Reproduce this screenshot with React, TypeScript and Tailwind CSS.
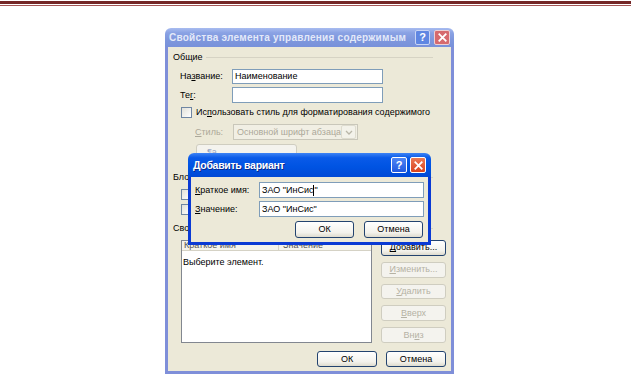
import React from "react";

function XIcon({ size = 8 }: { size?: number }) {
  return (
    <svg width={size} height={size} viewBox="0 0 10 10">
      <path d="M1.5 1.5 L8.5 8.5 M8.5 1.5 L1.5 8.5" stroke="white" strokeWidth="2" strokeLinecap="square" />
    </svg>
  );
}

function Btn({
  children,
  disabled,
  className = "",
}: {
  children?: React.ReactNode;
  disabled?: boolean;
  className?: string;
}) {
  return (
    <div
      className={
        "flex items-center justify-center rounded-[3px] border text-[9px] leading-none " +
        (disabled
          ? "border-[#cfcdc0] bg-[#f4f3ee] text-[#b5b2a4] "
          : "border-[#23436f] bg-[linear-gradient(180deg,#ffffff,#f3f2ec_70%,#dedbce)] text-black ") +
        className
      }
    >
      {children}
    </div>
  );
}

function Check() {
  return <div className="h-[11px] w-[11px] shrink-0 border border-[#6f86a3] bg-[linear-gradient(135deg,#e2e1d9,#ffffff)]" />;
}

function Group({ label }: { label: string }) {
  return (
    <div className="flex h-[11px] items-center pl-[5px] pr-[18px]">
      <span className="text-[9px] leading-none text-black">{label}</span>
      <div className="ml-[3px] h-px flex-1 bg-[#d6d3c4]" />
    </div>
  );
}

function InnerDialog() {
  return (
    <div className="absolute left-[23px] top-[125px] w-[243px]">
      <div className="flex h-[24px] items-center justify-between rounded-t-[6px] bg-[linear-gradient(180deg,#3d83f5_0%,#0a5ae8_20%,#0054e3_55%,#0049d6_100%)] pl-[5px] pr-[5px]">
        <span className="text-[10.5px] font-bold leading-none tracking-[-0.3px] text-white [text-shadow:1px_1px_0_#0a2a8a]">
          Добавить вариант
        </span>
        <div className="flex gap-[3px]">
          <div className="flex h-[16px] w-[16px] items-center justify-center rounded-[2px] border border-white bg-[linear-gradient(180deg,#4f86f5,#2159e0)] text-[11px] font-bold leading-none text-white">
            ?
          </div>
          <div className="flex h-[16px] w-[16px] items-center justify-center rounded-[2px] border border-white bg-[linear-gradient(180deg,#ec7a55,#d8431f)]">
            <XIcon size={9} />
          </div>
        </div>
      </div>
      <div className="flex flex-col border-x-[3px] border-b-[3px] border-[#0a3ad4] bg-[#ece9d8] pb-[4px] pt-[5px]">
        <div className="flex h-[16px] items-center pl-[4px] pr-[4px]">
          <div className="w-[64px] text-[9px] leading-none text-black">
            <span className="underline">К</span>раткое имя:
          </div>
          <div className="flex h-full flex-1 items-center border border-[#7f9db9] bg-white pl-[2px] text-[9px] leading-none text-black">
            ЗАО "ИнСис<span className="inline-block h-[11px] w-px bg-black" />"
          </div>
        </div>
        <div className="mt-[3px] flex h-[16px] items-center pl-[4px] pr-[4px]">
          <div className="w-[64px] text-[9px] leading-none text-black">
            <span className="underline">З</span>начение:
          </div>
          <div className="flex h-full flex-1 items-center border border-[#7f9db9] bg-white pl-[2px] text-[9px] leading-none text-black">
            ЗАО "ИнСис"
          </div>
        </div>
        <div className="mt-[4px] flex justify-end gap-[10px] pr-[5px]">
          <Btn className="h-[17px] w-[59px]">ОК</Btn>
          <Btn className="h-[17px] w-[59px]">Отмена</Btn>
        </div>
      </div>
    </div>
  );
}

export default function App() {
  return (
    <div className="min-h-[377px] w-[631px] bg-white font-['Liberation_Sans','Arial',sans-serif]">
      <div className="pt-[1px]">
        <div className="h-[3px] bg-[#742626]" />
        <div className="mt-[1px] h-px bg-[#a45656]" />
      </div>

      <div className="relative ml-[165px] mt-[22px] w-[289px]">
        {/* title bar (inactive) */}
        <div className="flex h-[19px] items-center justify-between rounded-t-[6px] bg-[linear-gradient(180deg,#a9bcf0_0%,#8aa2e4_25%,#7e97dd_60%,#7891da_100%)] pl-[4px] pr-[4px]">
          <span className="text-[10px] font-bold leading-none tracking-[0.25px] text-[#e3e9f9]">
            Свойства элемента управления содержимым
          </span>
          <div className="flex gap-[4px]">
            <div className="flex h-[15px] w-[15px] items-center justify-center rounded-[2px] border border-[#c9d5f5] bg-[#5f86e2] text-[11px] font-bold leading-none text-white">
              ?
            </div>
            <div className="flex h-[15px] w-[16px] items-center justify-center rounded-[2px] border border-[#ecd0d3] bg-[#d66a6e]">
              <XIcon size={9} />
            </div>
          </div>
        </div>

        {/* body */}
        <div className="flex flex-col border-x-[3px] border-b-[3px] border-[#7f8fd9] bg-[#ece9d8] pb-[4px] pt-[5px]">
          <Group label="Общие" />

          <div className="mt-[6px] flex h-[15px] items-center pl-[12px]">
            <div className="w-[52px] text-[9px] leading-none text-black">
              На<span className="underline">з</span>вание:
            </div>
            <div className="flex h-full w-[151px] items-center border border-[#7f9db9] bg-white pl-[2px] text-[9px] leading-none text-black">
              Наименование
            </div>
          </div>

          <div className="mt-[3px] flex h-[16px] items-center pl-[12px]">
            <div className="w-[52px] text-[9px] leading-none text-black">
              Те<span className="underline">г</span>:
            </div>
            <div className="h-full w-[151px] border border-[#7f9db9] bg-white" />
          </div>

          <div className="mt-[4px] flex h-[11px] items-center gap-[4px] pl-[13px]">
            <Check />
            <span className="text-[9px] leading-none text-black">
              Ис<span className="underline">п</span>ользовать стиль для форматирования содержимого
            </span>
          </div>

          <div className="mt-[6px] flex h-[16px] items-center pl-[27px]">
            <div className="w-[38px] text-[9px] leading-none text-[#aca899]">
              <span className="underline">С</span>тиль:
            </div>
            <div className="flex h-full w-[125px] items-center border border-[#c9c7ba] bg-[#f1efe4]">
              <span className="flex-1 overflow-hidden whitespace-nowrap pl-[3px] text-[9px] leading-none text-[#aca899]">
                Основной шрифт абзаца
              </span>
              <div className="mr-px flex h-[14px] w-[15px] shrink-0 items-center justify-center rounded-[2px] border border-[#dedccf] bg-[#f3f2ea]">
                <svg width="8" height="5" viewBox="0 0 8 5">
                  <path d="M1 1 L4 4 L7 1" stroke="#b9b6a8" strokeWidth="1.3" fill="none" />
                </svg>
              </div>
            </div>
          </div>

          <div className="mt-[4px] flex pl-[28px]">
            <Btn disabled className="h-[17px] w-[101px] items-start justify-start pl-[10px] pt-[3px]">
              <span className="text-[9px] text-[#9aa7c4]">¶a</span>
            </Btn>
          </div>

          <div className="mt-[11px]">
            <Group label="Блокировка" />
          </div>
          <div className="mt-[6px] flex h-[11px] items-center pl-[13px]">
            <Check />
          </div>
          <div className="mt-[4px] flex h-[11px] items-center pl-[13px]">
            <Check />
          </div>

          <div className="mt-[8px]">
            <Group label="Свойства раскрывающегося списка" />
          </div>

          <div className="mt-[6px] flex h-[103px] gap-[9px] pl-[13px] pr-[5px]">
            <div className="flex w-[191px] flex-col border border-[#828790] bg-white">
              <div className="flex h-[10px] items-end border-b border-[#d5d2c5] bg-[#f4f3ec] text-[9px] leading-none text-[#555]">
                <div className="w-[97px] border-r border-[#d5d2c5] pl-[2px]">Краткое имя</div>
                <div className="pl-[4px]">Значение</div>
              </div>
              <div className="pl-[1px] pt-[7px] text-[9px] leading-none text-black">Выберите элемент.</div>
            </div>
            <div className="flex w-[65px] flex-col gap-[6px]">
              <Btn className="h-[16px]">
                <span>
                  <span className="underline">Д</span>обавить...
                </span>
              </Btn>
              <Btn disabled className="h-[16px]">
                <span>
                  <span className="underline">И</span>зменить...
                </span>
              </Btn>
              <Btn disabled className="h-[16px]">
                <span>
                  <span className="underline">У</span>далить
                </span>
              </Btn>
              <Btn disabled className="h-[16px]">
                <span>
                  <span className="underline">В</span>верх
                </span>
              </Btn>
              <Btn disabled className="h-[16px]">
                <span>
                  Вн<span className="underline">и</span>з
                </span>
              </Btn>
            </div>
          </div>

          <div className="mt-[8px] flex justify-end gap-[9px] pr-[5px]">
            <Btn className="h-[16px] w-[60px]">ОК</Btn>
            <Btn className="h-[16px] w-[60px]">Отмена</Btn>
          </div>
        </div>

        <InnerDialog />
      </div>
    </div>
  );
}
